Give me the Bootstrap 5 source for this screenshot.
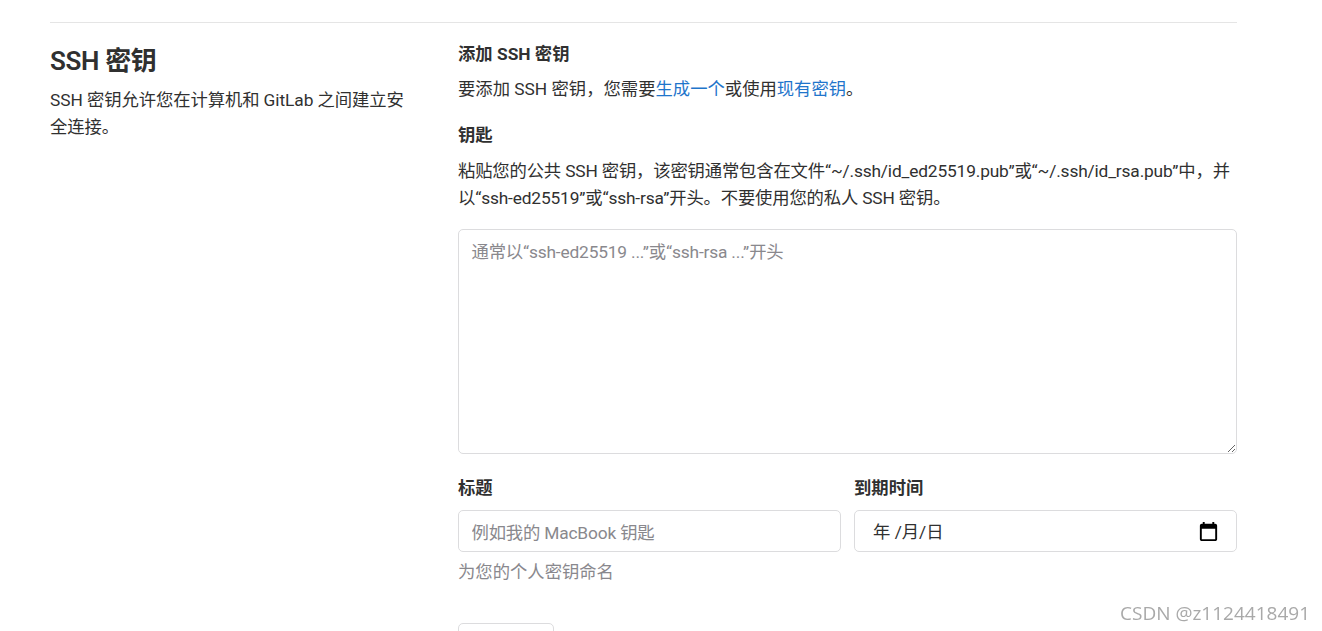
<!DOCTYPE html>
<html lang="zh-CN">
<head>
<meta charset="utf-8">
<title>SSH 密钥</title>
<link href="https://cdn.jsdelivr.net/npm/bootstrap@5.3.0/dist/css/bootstrap.min.css" rel="stylesheet">
<style>
html,body{overflow:hidden;height:631px}
body{font-family:Roboto,"Noto Sans CJK SC",sans-serif;font-size:17.33px;line-height:27px;color:#303030;background:#fff}
.page-wrap{padding:22px 85px 0 50px}
.top-rule{border-top:1px solid #e5e5e5;padding-top:21px}
.split-row{--bs-gutter-x:37px}
.sec-title{font-size:26px;line-height:30px;font-weight:600;margin:2px 0 11px;color:#303030;letter-spacing:-.35px}
.sec-text{margin:0;letter-spacing:-.08px}
.tight-note{letter-spacing:-.16px}
.field-label{font-weight:700;line-height:20px;margin-bottom:12px;display:block}
.note{margin-bottom:0}
.note a{color:#1f75cb;text-decoration:none}
.gap-key{margin-top:22px;margin-bottom:13px}
.key-box{height:225px;border:1px solid #dcdcde;border-radius:5px;padding:9px 12.5px;font-size:17.33px;line-height:26px;color:#303030;box-shadow:none;margin-top:17px}
.key-box::placeholder,.title-box::placeholder{color:#89888d;letter-spacing:-.17px}
.field-row{--bs-gutter-x:13px}
.title-box,.date-box{height:42px;border:1px solid #dcdcde;border-radius:5px;padding:10px 12.5px 6px;font-size:17.33px;line-height:26px;color:#303030}
.date-box{padding:0 16px 0 18px}
.date-text{padding-top:2px}
.hint{color:#89888d;line-height:26px;margin-top:7px}
.save-btn{width:96px;height:42px;border:1px solid #dcdcde;border-radius:5px;background:#fff;font-size:17.33px;color:#303030;padding:0;margin-top:38px}
.mark-csdn{position:fixed;right:12px;top:600px;font-family:"Open Sans","Noto Sans",sans-serif;font-size:19px;line-height:26px;color:#a9a9a9}
</style>
</head>
<body>
<div class="page-wrap">
  <div class="top-rule">
    <div class="row split-row">
      <div class="col-4">
        <h4 class="sec-title">SSH 密钥</h4>
        <p class="sec-text">SSH 密钥允许您在计算机和 GitLab 之间建立安全连接。</p>
      </div>
      <div class="col-8">
        <label class="field-label">添加 SSH 密钥</label>
        <p class="note">要添加 SSH 密钥，您需要<a href="#">生成一个</a>或使用<a href="#">现有密钥</a>。</p>
        <label class="field-label gap-key" for="k">钥匙</label>
        <p class="note tight-note">粘贴您的公共 SSH 密钥，该密钥通常包含在文件“~/.ssh/id_ed25519.pub”或“~/.ssh/id_rsa.pub”中，并以“ssh-ed25519”或“ssh-rsa”开头。不要使用您的私人 SSH 密钥。</p>
        <textarea id="k" class="form-control key-box" placeholder="通常以“ssh-ed25519 ...”或“ssh-rsa ...”开头"></textarea>
        <div class="row field-row mt-4">
          <div class="col-6">
            <label class="field-label" for="t">标题</label>
            <input id="t" class="form-control title-box" placeholder="例如我的 MacBook 钥匙">
            <div class="hint">为您的个人密钥命名</div>
          </div>
          <div class="col-6">
            <label class="field-label">到期时间</label>
            <div class="form-control date-box d-flex align-items-center justify-content-between">
              <span class="date-text">年 /月/日</span>
              <svg width="23" height="23" viewBox="0 0 24 24" aria-hidden="true"><path d="M19 4h-1V2h-2v2H8V2H6v2H5C3.9 4 3 4.9 3 6v14c0 1.1.9 2 2 2h14c1.1 0 2-.9 2-2V6c0-1.1-.9-2-2-2zm0 16H5V9h14v11z" fill="#000"/></svg>
            </div>
          </div>
        </div>
        <button class="btn save-btn" type="button">添加密钥</button>
      </div>
    </div>
  </div>
</div>
<div class="mark-csdn">CSDN @z1124418491</div>
<script src="https://cdn.jsdelivr.net/npm/bootstrap@5.3.0/dist/js/bootstrap.bundle.min.js"></script>
</body>
</html>
